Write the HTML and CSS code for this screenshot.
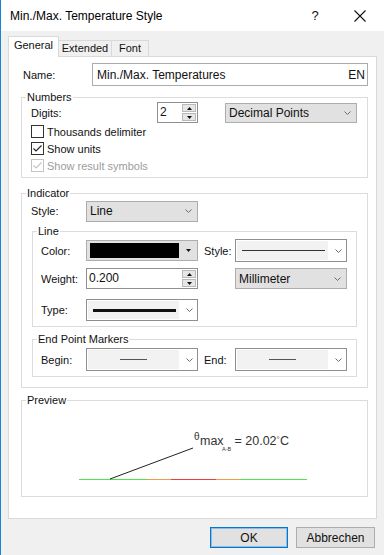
FILE: index.html
```html
<!DOCTYPE html>
<html lang="en">
<head>
<meta charset="utf-8">
<title>Min./Max. Temperature Style</title>
<link rel="stylesheet" href="styles.css">
</head>
<body>
<div class="titlebar">
  <span class="title">Min./Max. Temperature Style</span>
  <span class="help">?</span>
  <svg class="close" width="12" height="12" viewBox="0 0 12 12"><path d="M0.5 0.5 L11.5 11.5 M11.5 0.5 L0.5 11.5" stroke="#111" stroke-width="1.1" fill="none"/></svg>
</div>
<div class="tabs">
  <div class="tab sel t-gen">General</div>
  <div class="tab t-ext">Extended</div>
  <div class="tab t-font">Font</div>
</div>
<div class="panel">
  <div class="name-row">
    <span class="name-lbl">Name:</span>
    <div class="textbox"><span>Min./Max. Temperatures</span><span>EN</span></div>
  </div>

  <fieldset class="grp g-wide g-numbers">
    <legend>Numbers</legend>
    <div class="gbody b-numbers">
      <div class="digits-row">
        <span class="lbl l-digits">Digits:</span>
        <div class="spin sp-digits">
          <span class="val">2</span>
          <span class="sbtns">
            <span class="sb"><svg width="5" height="3" viewBox="0 0 5 3"><path d="M2.5 0 L5 3 L0 3 Z" fill="#111"/></svg></span>
            <span class="sb"><svg width="5" height="3" viewBox="0 0 5 3"><path d="M0 0 L5 0 L2.5 3 Z" fill="#111"/></svg></span>
          </span>
        </div>
        <div class="combo c-dec"><span>Decimal Points</span><svg class="chev" width="7" height="4" viewBox="0 0 7 4"><path d="M0.5 0.5 L3.5 3.5 L6.5 0.5" fill="none" stroke="#6d6d6d"/></svg></div>
      </div>
      <div class="chk"><span class="box"></span><span>Thousands delimiter</span></div>
      <div class="chk"><span class="box"><svg width="11" height="11" viewBox="0 0 11 11"><path d="M1.5 5.5 L4 8 L9.5 2.5" fill="none" stroke="#222" stroke-width="1.1"/></svg></span><span>Show units</span></div>
      <div class="chk dis"><span class="box"><svg width="11" height="11" viewBox="0 0 11 11"><path d="M1.5 5.5 L4 8 L9.5 2.5" fill="none" stroke="#c4c4c4" stroke-width="1.1"/></svg></span><span>Show result symbols</span></div>
    </div>
  </fieldset>

  <fieldset class="grp g-wide g-indicator">
    <legend>Indicator</legend>
    <div class="gbody b-indicator">
      <div class="style-row">
        <span class="lbl l-style">Style:</span>
        <div class="combo c-std"><span>Line</span><svg class="chev" width="7" height="4" viewBox="0 0 7 4"><path d="M0.5 0.5 L3.5 3.5 L6.5 0.5" fill="none" stroke="#6d6d6d"/></svg></div>
      </div>

      <fieldset class="grp g-narrow g-line">
        <legend>Line</legend>
        <div class="gbody b-line">
          <div class="row r-color">
            <span class="lbl l-sub">Color:</span>
            <div class="combo c-std c-color"><span class="swatch"></span><svg class="tri" width="5" height="3" viewBox="0 0 5 3"><path d="M0 0 L5 0 L2.5 3 Z" fill="#111"/></svg></div>
            <span class="lbl l-style2">Style:</span>
            <div class="pick p-tall"><span class="pick-in"><span class="ln ln-thin"></span></span><svg class="chev" width="7" height="4" viewBox="0 0 7 4"><path d="M0.5 0.5 L3.5 3.5 L6.5 0.5" fill="none" stroke="#6d6d6d"/></svg></div>
          </div>
          <div class="row r-weight">
            <span class="lbl l-sub">Weight:</span>
            <div class="spin sp-weight">
              <span class="val">0.200</span>
              <span class="sbtns">
                <span class="sb"><svg width="5" height="3" viewBox="0 0 5 3"><path d="M2.5 0 L5 3 L0 3 Z" fill="#111"/></svg></span>
                <span class="sb"><svg width="5" height="3" viewBox="0 0 5 3"><path d="M0 0 L5 0 L2.5 3 Z" fill="#111"/></svg></span>
              </span>
            </div>
            <span class="lbl l-style2"></span>
            <div class="combo c-std"><span>Millimeter</span><svg class="chev" width="7" height="4" viewBox="0 0 7 4"><path d="M0.5 0.5 L3.5 3.5 L6.5 0.5" fill="none" stroke="#6d6d6d"/></svg></div>
          </div>
          <div class="row r-type">
            <span class="lbl l-sub">Type:</span>
            <div class="pick p-type"><span class="pick-in"><span class="ln ln-thick"></span></span><svg class="chev" width="7" height="4" viewBox="0 0 7 4"><path d="M0.5 0.5 L3.5 3.5 L6.5 0.5" fill="none" stroke="#6d6d6d"/></svg></div>
          </div>
        </div>
      </fieldset>

      <fieldset class="grp g-narrow g-end">
        <legend>End Point Markers</legend>
        <div class="gbody b-line">
          <div class="row r-end">
            <span class="lbl l-sub">Begin:</span>
            <div class="pick p-tall p-gray"><span class="pick-in center"><span class="ln ln-short"></span></span><svg class="chev" width="7" height="4" viewBox="0 0 7 4"><path d="M0.5 0.5 L3.5 3.5 L6.5 0.5" fill="none" stroke="#6d6d6d"/></svg></div>
            <span class="lbl l-style2">End:</span>
            <div class="pick p-tall p-gray"><span class="pick-in center"><span class="ln ln-short"></span></span><svg class="chev" width="7" height="4" viewBox="0 0 7 4"><path d="M0.5 0.5 L3.5 3.5 L6.5 0.5" fill="none" stroke="#6d6d6d"/></svg></div>
          </div>
        </div>
      </fieldset>
    </div>
  </fieldset>

  <fieldset class="grp g-wide g-preview">
    <legend>Preview</legend>
    <svg class="preview" width="344" height="90" viewBox="0 0 344 90">
      <rect x="57" y="73" width="68" height="1" fill="#4fe34f"/>
      <rect x="125" y="73" width="24" height="1" fill="#f49a4c"/>
      <rect x="149" y="73" width="45" height="1" fill="#ec3f33"/>
      <rect x="194" y="73" width="24" height="1" fill="#f49a4c"/>
      <rect x="218" y="73" width="67" height="1" fill="#4fe34f"/>
      <line x1="88" y1="73" x2="171" y2="42" stroke="#222" stroke-width="1"/>
      <text class="pv" x="172" y="34" font-size="10">θ</text>
      <text class="pv" x="178" y="39" font-size="12.5">max</text>
      <text class="pv" x="200" y="44.5" font-size="5.5">A-B</text>
      <text class="pv" x="212.5" y="39" font-size="12.5">= 20.02</text>
      <text class="pv" x="254.5" y="36" font-size="8">°</text>
      <text class="pv" x="258" y="39" font-size="12.5">C</text>
    </svg>
  </fieldset>
</div>
<div class="buttons">
  <button class="btn ok" type="button">OK</button>
  <button class="btn" type="button">Abbrechen</button>
</div>
</body>
</html>
```
FILE: styles.css
```css
* { box-sizing: border-box; }
html, body { margin: 0; padding: 0; }
body {
  width: 384px;
  height: 555px;
  overflow: hidden;
  background: #f0f0f0;
  border-left: 1px solid #1883d7;
  font-family: "Liberation Sans", Arial, sans-serif;
  font-size: 11px;
  color: #111;
}

/* title bar */
.titlebar {
  height: 31px;
  background: #fff;
  display: flex;
  align-items: center;
  padding-left: 9px;
  padding-right: 18px;
}
.title { flex: 1; font-size: 12px; color: #000; }
.help { width: 8px; text-align: center; font-size: 13px; color: #111; }
.close { margin-left: 35px; display: block; }

/* tabs */
.tabs {
  height: 25px;
  display: flex;
  align-items: flex-end;
  padding-left: 7px;
}
.tab {
  height: 16px;
  border: 1px solid #d9d9d9;
  border-bottom: none;
  background: #f0f0f0;
  line-height: 14px;
  text-align: center;
}
.tab.sel {
  height: 21px;
  margin-bottom: -1px;
  background: #fff;
  position: relative;
  z-index: 1;
  line-height: 16px;
}
.t-gen { width: 51px; }
.t-ext { width: 53px; border-left: none; }
.t-font { width: 37px; border-left: none; }

/* panel */
.panel {
  margin-left: 7px;
  width: 369px;
  height: 463px;
  border: 1px solid #d9d9d9;
  background: #fff;
  padding: 6px 0 0 12px;
  display: flex;
  flex-direction: column;
}
.name-row { display: flex; align-items: center; height: 23px; }
.name-lbl { margin-left: 2px; width: 69px; }
.textbox {
  width: 276px;
  height: 23px;
  border: 1px solid #ababab;
  display: flex;
  align-items: center;
  justify-content: space-between;
  padding: 0 2px 0 4px;
  font-size: 12px;
  color: #111;
}

/* group boxes */
.grp {
  margin: 0;
  padding: 0;
  border: 1px solid #dcdcdc;
  min-width: 0;
}
.grp legend {
  padding: 0 1px;
  margin-left: 4px;
  height: 11px;
  line-height: 11px;
  font-size: 11px;
}
.g-wide { width: 347px; }
.g-narrow { width: 325px; margin-left: 1px; }
.g-numbers { margin-top: 6px; }
.g-indicator { margin-top: 10px; }
.g-line { margin-top: 5px; }
.g-end { margin-top: 7px; }
.g-preview { margin-top: 7px; }

.b-numbers { padding: 0 0 3px 9px; }
.b-indicator { padding: 0 0 10px 9px; }
.b-line { padding: 0 0 5px 8px; }

.lbl { display: block; }
.l-digits { width: 126px; }
.l-style { width: 55px; }
.l-sub { width: 45px; }
.l-style2 { width: 31px; margin-left: 6px; }

.digits-row {
  display: flex;
  align-items: center;
  height: 21px;
  margin-top: -1px;
}
.style-row {
  display: flex;
  align-items: center;
  height: 20px;
  margin-top: 2px;
}
.row { display: flex; align-items: center; }
.r-color { height: 23px; margin-top: 2px; }
.r-weight { height: 21px; margin-top: 6px; }
.r-type { height: 22px; margin-top: 10px; }
.r-end { height: 23px; margin-top: 3px; }

/* checkboxes */
.chk { display: flex; align-items: center; height: 17px; }
.chk .box {
  width: 13px;
  height: 13px;
  border: 1px solid #333;
  background: #fff;
  margin-right: 3px;
  display: flex;
  align-items: center;
  justify-content: center;
}
.chk.dis { color: #9d9d9d; }
.chk.dis .box { border-color: #c4c4c4; }

/* spin */
.spin {
  display: flex;
  height: 21px;
  border: 1px solid #8f8f8f;
  background: #fff;
}
.sp-digits { width: 41px; }
.sp-weight { width: 112px; }
.spin .val { flex: 1; padding-left: 2px; line-height: 19px; font-size: 12px; }
.sbtns {
  width: 15px;
  display: flex;
  flex-direction: column;
  gap: 1px;
  padding: 1px 1px 1px 0;
}
.sb {
  flex: 1;
  background: #e6e6e6;
  border: 1px solid #b9b9b9;
  display: flex;
  align-items: center;
  justify-content: center;
}
.sb svg { display: block; }

/* combos */
.combo {
  display: flex;
  align-items: center;
  height: 21px;
  border: 1px solid #adadad;
  background: #e1e1e1;
  padding: 0 5px 0 3px;
  font-size: 12px;
}
.combo .chev, .pick .chev { margin-left: auto; display: block; }
.c-dec { width: 132px; height: 20px; margin-left: 27px; }
.c-std { width: 112px; }
.c-color { padding: 2px 6px 2px 3px; height: 21px; }
.swatch { width: 89px; height: 15px; background: #000; display: block; }
.tri { margin-left: auto; display: block; }

.pick {
  display: flex;
  align-items: center;
  width: 112px;
  border: 1px solid #8f8f8f;
  background: #fff;
  padding: 1px 4px 1px 1px;
}
.p-tall { height: 23px; }
.p-type { height: 22px; }
.pick-in {
  width: 91px;
  height: 100%;
  background: #f2f2f2;
  display: flex;
  align-items: center;
  padding-left: 5px;
}
.pick-in.center { justify-content: center; padding-left: 0; }
.ln { display: block; background: #222; }
.ln-thin { width: 83px; height: 1px; background: #333; }
.ln-thick { width: 83px; height: 3px; background: #111; }
.ln-short { width: 27px; height: 1px; background: #555; }

/* preview */
.preview { display: block; }
.pv { font-family: "Liberation Sans", Arial, sans-serif; fill: #333; }

/* buttons */
.buttons {
  display: flex;
  justify-content: flex-end;
  gap: 8px;
  padding-right: 9px;
  margin-top: 8px;
}
.btn {
  height: 21px;
  width: 79px;
  margin: 0;
  padding: 0;
  border: 1px solid #adadad;
  background: #e1e1e1;
  font-family: "Liberation Sans", Arial, sans-serif;
  font-size: 12px;
  color: #111;
}
.btn.ok {
  width: 78px;
  border-color: #0078d7;
  box-shadow: inset 0 0 0 1px rgba(0, 120, 215, 0.35);
}
```
